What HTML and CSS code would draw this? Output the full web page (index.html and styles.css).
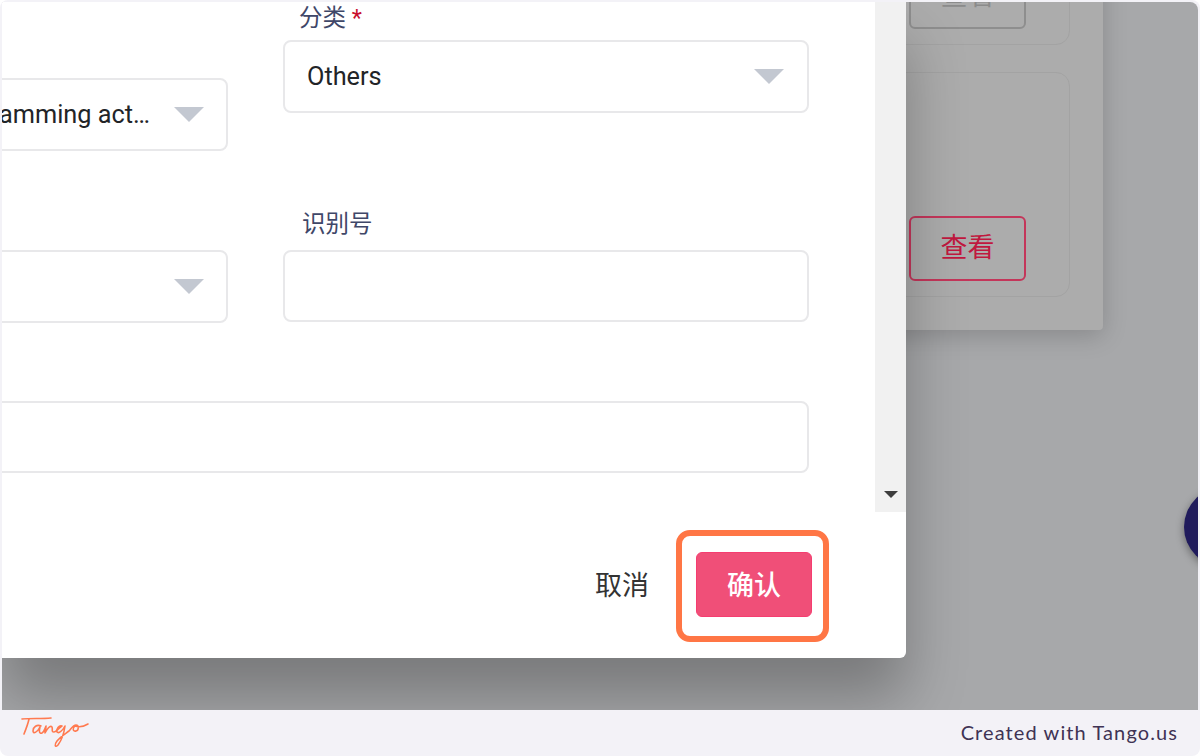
FILE: index.html
```html
<!DOCTYPE html>
<html lang="zh-CN">
<head>
	<meta charset="utf-8">
	<title>Created with Tango</title>
	<link rel="stylesheet" href="styles.css">
</head>
<body>
	<div class="frame">
		<div class="stage">
			<div class="back-panel">
				<div class="back-card">
					<div class="view-btn view-btn-muted">查看</div>
				</div>
				<div class="back-card back-card-tall">
					<div class="view-btn">查看</div>
				</div>
			</div>
			<div class="chat-bubble"></div>

			<div class="modal">
				<div class="modal-body">
					<div class="form-clip">
						<div class="form-grid">
							<div class="form-col form-col-left">
								<div class="select select-text">
									<span>Programming act…</span>
									<i class="caret"></i>
								</div>
								<div class="select">
									<i class="caret"></i>
								</div>
							</div>
							<div class="form-col">
								<label class="field-label">分类 <b>*</b></label>
								<div class="select">
									<span>Others</span>
									<i class="caret"></i>
								</div>
								<label class="field-label field-label-second">识别号</label>
								<div class="input"></div>
							</div>
							<div class="input input-full"></div>
						</div>
					</div>
					<div class="scrollbar">
						<i class="scroll-arrow"></i>
					</div>
				</div>
				<div class="modal-actions">
					<span class="cancel-btn">取消</span>
					<span class="confirm-btn">确认</span>
				</div>
			</div>
		</div>
		<div class="footer">
			<svg class="tango-logo" viewBox="0 0 70 34" width="70" height="34" role="img" aria-label="Tango">
				<path d="M1 4 C10 3 20 4 30 3"/>
				<path d="M8 4 C7 9 5 14 3 19"/>
				<path d="M20 11 C16 9 12 12 12 16 C12 19 16 18 19 12 C18 16 18 19 21 18 C23 17 24 13 25 11 C25 14 24 16 24 18 C26 14 29 10 31 12 C32 14 30 17 33 17 C35 17 38 13 41 11 C38 10 35 14 36 17 C38 19 42 15 44 11 C43 18 40 26 37 30 C34 33 33 30 36 26 C39 22 44 19 48 16 C50 14 52 10 55 10 C58 10 58 15 55 16 C52 17 51 13 54 11 C57 12 62 12 67 9"/>
			</svg>
			<span class="footer-text">Created with Tango.us</span>
		</div>
	</div>
</body>
</html>
```

FILE: styles.css
```css
* {
	margin: 0;
	padding: 0;
	box-sizing: border-box;
}

body {
	background: #fff;
	font-family: Roboto, "Noto Sans CJK SC", sans-serif;
}

.frame {
	display: flex;
	flex-direction: column;
	height: 756px;
	padding: 2px 2px 0;
	background: #f3f2f7;
	border-radius: 8px;
	overflow: hidden;
}

/* 截图区域 */
.stage {
	position: relative;
	flex: 1;
	background: #a7a8aa;
	border-radius: 0 8px 0 0;
	overflow: hidden;
}

.back-panel {
	position: absolute;
	left: 500px;
	top: -100px;
	width: 601px;
	height: 428px;
	display: flex;
	flex-direction: column;
	justify-content: flex-end;
	gap: 27px;
	padding: 0 33px 33px 0;
	background: #acacac;
	border-radius: 4px;
	box-shadow: 0 6px 24px rgba(0, 0, 0, .18);
}

.back-card {
	display: flex;
	justify-content: flex-end;
	align-items: flex-end;
	height: 143px;
	padding: 0 43px 15px 0;
	border: 1px solid #a3a3a3;
	border-radius: 14px;
}

.back-card-tall {
	height: 225px;
}

.view-btn {
	width: 117px;
	height: 65px;
	line-height: 61px;
	text-align: center;
	font-size: 27px;
	color: #c0183f;
	border: 2px solid #c4365a;
	border-radius: 6px;
}

.view-btn-muted {
	color: #8b8b8b;
	border-color: #8e8e8e;
}

.chat-bubble {
	position: absolute;
	left: 1182px;
	top: 485px;
	width: 80px;
	height: 80px;
	background: #201b5c;
	border-radius: 50%;
	box-shadow: 0 3px 8px rgba(0, 0, 0, .4);
}

/* 弹窗 */
.modal {
	position: absolute;
	left: 0;
	top: 0;
	width: 904px;
	height: 656px;
	display: flex;
	flex-direction: column;
	background: #fff;
	border-radius: 0 0 6px 0;
	box-shadow: 0 40px 60px rgba(0, 0, 0, .28);
}

.modal-body {
	display: flex;
	height: 510px;
}

.form-clip {
	flex: 1;
	overflow: hidden;
}

.form-grid {
	display: grid;
	grid-template-columns: 526px 526px;
	column-gap: 55px;
	row-gap: 78px;
	margin-left: -300px;
}

.form-col-left {
	padding-top: 76px;
}

.form-col-left .select + .select {
	margin-top: 99px;
}

.field-label {
	display: block;
	height: 38px;
	padding: 1px 0 0 16px;
	font-size: 23.5px;
	line-height: 30px;
	color: #3f4768;
}

.field-label b {
	font-weight: 400;
	color: #c8102e;
}

.field-label-second {
	height: 33px;
	margin-top: 104px;
	padding: 0 0 0 19px;
	line-height: 14px;
}

.select,
.input {
	height: 73px;
	background: #fff;
	border: 2px solid #e8e8ea;
	border-radius: 8px;
}

.input {
	height: 72px;
}

.input-full {
	grid-column: 1 / 3;
}

.select {
	display: flex;
	justify-content: space-between;
	align-items: center;
	padding: 0 23px 0 22px;
	font-size: 25.3px;
	color: #222427;
}

.select-text {
	padding-left: 0;
}

.form-col-left .select {
	padding-right: 22px;
}

.select-text span {
	margin-left: auto;
	margin-right: 24px;
}

.caret {
	width: 0;
	height: 0;
	margin-left: auto;
	border-left: 15px solid transparent;
	border-right: 15px solid transparent;
	border-top: 15px solid #c3c8d1;
}

.select-text .caret {
	margin-left: 0;
}

.scrollbar {
	display: flex;
	justify-content: center;
	align-items: flex-end;
	width: 31px;
	padding-bottom: 14px;
	background: #f1f1f1;
}

.scroll-arrow {
	width: 0;
	height: 0;
	border-left: 7px solid transparent;
	border-right: 7px solid transparent;
	border-top: 7px solid #3d3d3d;
}

.modal-actions {
	flex: 1;
	display: flex;
	justify-content: flex-end;
	align-items: center;
	gap: 47px;
	padding: 0 94px 2px 0;
}

.cancel-btn {
	margin-bottom: 2px;
	font-size: 27px;
	color: #333;
}

.confirm-btn {
	position: relative;
	width: 116px;
	height: 65px;
	line-height: 66px;
	text-align: center;
	font-size: 27px;
	font-weight: 500;
	color: #fff;
	background: #f04f78;
	border: 1px solid #f53d70;
	border-radius: 6px;
}

/* 橙色高亮框 */
.confirm-btn::after {
	content: "";
	position: absolute;
	left: -21px;
	top: -23px;
	right: -18px;
	bottom: -26px;
	border: 6px solid #ff7645;
	border-radius: 14px;
}

/* 底栏 */
.footer {
	display: flex;
	justify-content: space-between;
	align-items: center;
	height: 46px;
	padding: 0 20px 2px 19px;
}

.tango-logo {
	fill: none;
	stroke: #ff7a50;
	stroke-width: 1.6;
	stroke-linecap: round;
	stroke-linejoin: round;
}

.footer-text {
	font-family: Lato, sans-serif;
	font-size: 20px;
	letter-spacing: 1.1px;
	color: #3f3354;
}
```
